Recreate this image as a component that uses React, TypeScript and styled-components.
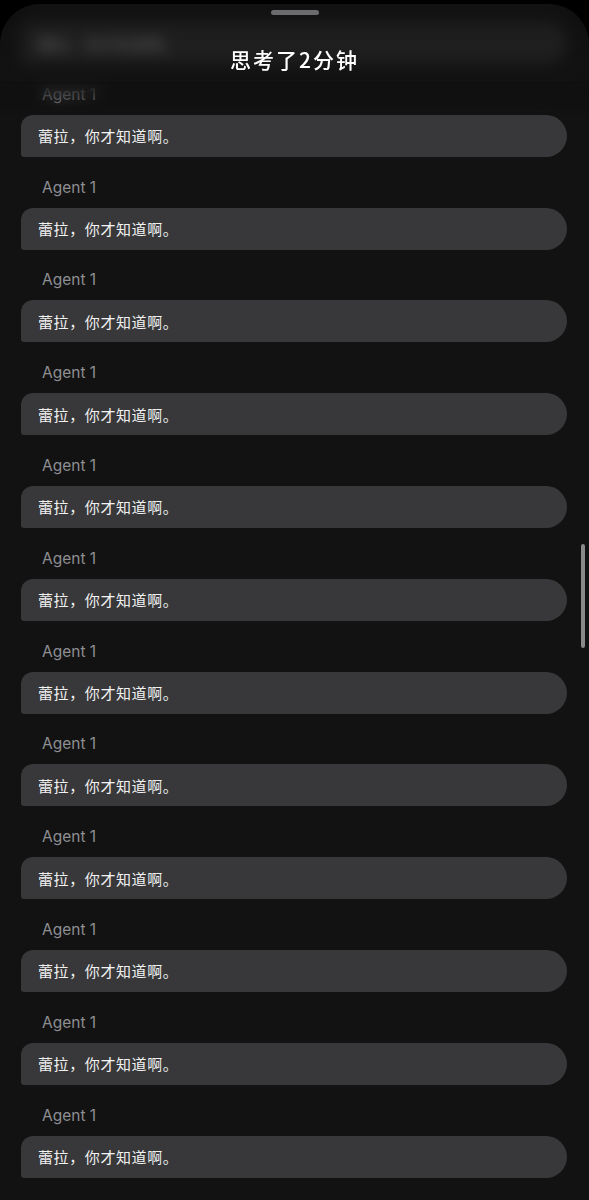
import React from "react";
import styled, { createGlobalStyle } from "styled-components";

const Global = createGlobalStyle`
  html, body {
    margin: 0;
    padding: 0;
    background: #000;
    height: 1200px;
    overflow: hidden;
  }
  body {
    font-family: Inter, "Noto Sans CJK SC", sans-serif;
    -webkit-font-smoothing: antialiased;
  }
`;

const Page = styled.div`
  width: 589px;
  height: 1200px;
  padding-top: 4px;
  box-sizing: border-box;
  background: #000;
`;

const Sheet = styled.div`
  position: relative;
  height: 1196px;
  background: #121212;
  border-radius: 40px 40px 0 0;
  overflow: hidden;
`;

const List = styled.div`
  display: flex;
  flex-direction: column;
  gap: 20.8px;
  padding: 18px 22px 0 21px;
`;

const Item = styled.div`
  display: flex;
  flex-direction: column;
  gap: 10px;
`;

const Label = styled.div`
  padding-left: 21px;
  font-family: Inter, sans-serif;
  font-size: 15.5px;
  line-height: 20px;
  color: #8e8e93;
`;

const Bubble = styled.div`
  height: 42px;
  display: flex;
  align-items: center;
  padding: 0 17px;
  background: #38383a;
  border-radius: 12px 21px 21px 3px;
  font-family: "Noto Sans CJK SC", sans-serif;
  font-size: 15px;
  color: #f2f2f2;
  letter-spacing: 0.6px;
`;

const Header = styled.div`
  position: absolute;
  top: 0;
  left: 0;
  right: 0;
  height: 112px;
  display: flex;
  flex-direction: column;
  align-items: center;
  backdrop-filter: blur(7px);
  -webkit-backdrop-filter: blur(7px);
  background: linear-gradient(
    to bottom,
    rgba(18, 18, 18, 0.7) 0%,
    rgba(18, 18, 18, 0.66) 62%,
    rgba(18, 18, 18, 0.3) 85%,
    rgba(18, 18, 18, 0) 100%
  );
  mask-image: linear-gradient(to bottom, #000 70%, transparent 100%);
  -webkit-mask-image: linear-gradient(to bottom, #000 70%, transparent 100%);
`;

const Handle = styled.div`
  margin-top: 6px;
  width: 48px;
  height: 5px;
  border-radius: 3px;
  background: #6b6b6d;
`;

const Title = styled.div`
  margin-top: 29px;
  font-family: "Noto Sans CJK SC", sans-serif;
  font-size: 21px;
  line-height: 30px;
  font-weight: 500;
  letter-spacing: 2px;
  color: #ffffff;
`;

const ScrollThumb = styled.div`
  position: absolute;
  right: 4px;
  top: 540px;
  width: 4px;
  height: 104px;
  border-radius: 2px;
  background: #8a8a8c;
`;

const items = Array.from({ length: 13 }, (_, i) => i);

export default function App() {
  return (
    <Page>
      <Global />
      <Sheet>
        <List>
          {items.map((i) => (
            <Item key={i}>
              {i > 0 && <Label>Agent 1</Label>}
              <Bubble>蕾拉，你才知道啊。</Bubble>
            </Item>
          ))}
        </List>
        <Header>
          <Handle />
          <Title>思考了2分钟</Title>
        </Header>
        <ScrollThumb />
      </Sheet>
    </Page>
  );
}
